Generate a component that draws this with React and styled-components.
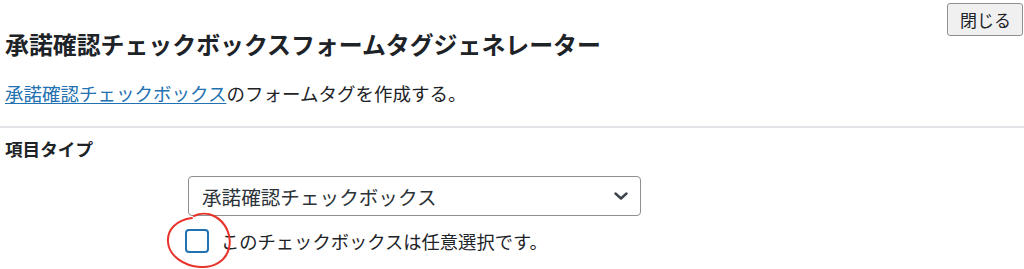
import React from "react";
import styled, { createGlobalStyle } from "styled-components";

const Global = createGlobalStyle`
  html, body { margin: 0; padding: 0; background: #fff; }
  body {
    font-family: "Noto Sans CJK JP", "Noto Sans", sans-serif;
    color: #1d2327;
  }
`;

const Page = styled.div`
  width: 1024px;
  height: 269px;
  overflow: hidden;
  background: #fff;
`;

const Header = styled.div`
  display: flex;
  justify-content: space-between;
  align-items: flex-start;
  padding: 3px 1px 0 5px;
`;

const Title = styled.h2`
  margin: 26px 0 0;
  font-size: 23.9px;
  line-height: 30px;
  font-weight: 700;
  color: #1d2327;
`;

const CloseButton = styled.button`
  height: 33px;
  padding: 0 11px 0 12px;
  font-family: inherit;
  font-size: 17px;
  color: #1d2327;
  background: #f0f0f1;
  border: 1px solid #8c8f94;
  border-radius: 3px;
  line-height: 1;
`;

const Description = styled.p`
  margin: 21px 0 0;
  padding-left: 5px;
  font-size: 18.5px;
  line-height: 26px;
  color: #1d2327;
`;

const Link = styled.a`
  color: #2271b1;
  text-decoration: underline;
  text-underline-offset: 2px;
`;

const Separator = styled.hr`
  margin: 20px 0 0;
  border: 0;
  height: 2px;
  background: #e2e4e7;
`;

const FieldLabel = styled.h3`
  margin: 8px 0 0;
  padding-left: 5px;
  font-size: 17.6px;
  line-height: 26px;
  font-weight: 700;
  color: #1d2327;
`;

const Field = styled.div`
  margin-top: 14px;
  padding-left: 185px;
  display: flex;
  flex-direction: column;
  align-items: flex-start;
`;

const SelectWrap = styled.div`
  position: relative;
  margin-left: 3px;
  width: 453px;
  height: 40px;
`;

const Select = styled.select`
  appearance: none;
  -webkit-appearance: none;
  width: 100%;
  height: 100%;
  box-sizing: border-box;
  padding: 0 40px 0 13px;
  font-family: inherit;
  font-size: 19.6px;
  color: #2c3338;
  background: #fff;
  border: 1px solid #8c8f94;
  border-radius: 4px;
  outline: none;
`;

const Chevron = styled.svg`
  position: absolute;
  right: 13px;
  top: 16px;
  pointer-events: none;
`;

const CheckRow = styled.label`
  position: relative;
  margin-top: 13px;
  display: flex;
  align-items: center;
  gap: 12px;
  font-size: 18.3px;
  line-height: 24px;
  color: #1d2327;
`;

const CheckBox = styled.span`
  width: 24px;
  height: 24px;
  box-sizing: border-box;
  border: 2px solid #2271b1;
  border-radius: 4px;
  background: #fff;
  flex: none;
`;

const Annotation = styled.svg`
  position: absolute;
  left: -19px;
  top: -17px;
  overflow: visible;
  pointer-events: none;
`;

export default function App() {
  return (
    <>
      <Global />
      <Page>
        <Header>
          <Title>承諾確認チェックボックスフォームタグジェネレーター</Title>
          <CloseButton>閉じる</CloseButton>
        </Header>
        <Description>
          <Link href="#">承諾確認チェックボックス</Link>のフォームタグを作成する。
        </Description>
        <Separator />
        <FieldLabel>項目タイプ</FieldLabel>
        <Field>
          <SelectWrap>
            <Select defaultValue="acceptance">
              <option value="acceptance">承諾確認チェックボックス</option>
            </Select>
            <Chevron width="14" height="8" viewBox="0 0 14 8">
              <path d="M1.5 1.5 L7 6.5 L12.5 1.5" fill="none" stroke="#3c434a" strokeWidth="2.4" strokeLinecap="round" strokeLinejoin="round" />
            </Chevron>
          </SelectWrap>
          <CheckRow>
            <CheckBox />
            このチェックボックスは任意選択です。
            <Annotation width="70" height="58" viewBox="0 0 70 58">
              <path
                d="M28 4 C34 1, 42 1, 48 4 C60 10, 66 24, 63 36 C60 50, 46 56, 34 55 C18 54, 3 44, 2 30 C1 18, 10 8, 26 6"
                fill="none"
                stroke="#e8332a"
                strokeWidth="2"
                strokeLinecap="round"
              />
            </Annotation>
          </CheckRow>
        </Field>
      </Page>
    </>
  );
}
